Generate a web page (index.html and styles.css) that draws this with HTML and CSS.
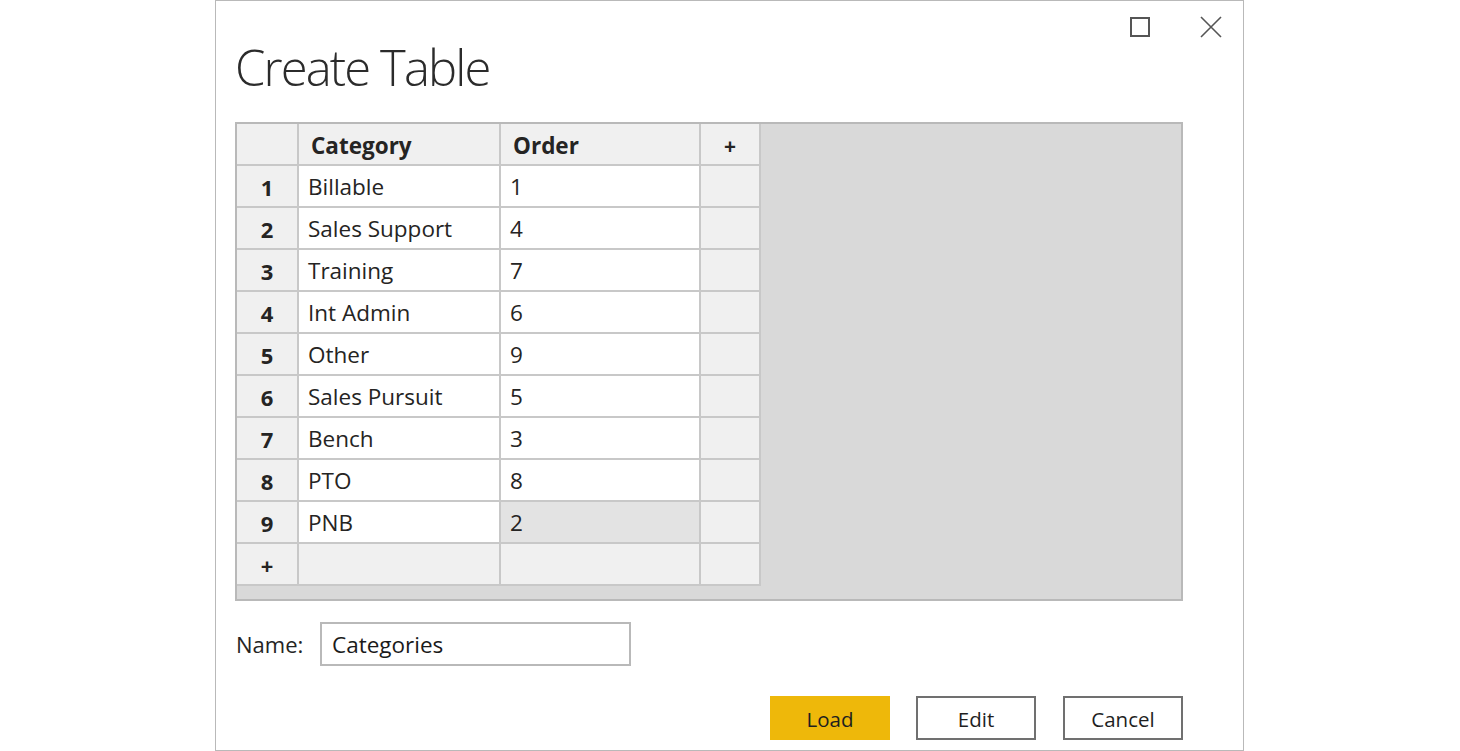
FILE: index.html
```html
<!DOCTYPE html>
<html lang="en">
<head>
<meta charset="utf-8">
<title>Create Table</title>
<link rel="stylesheet" href="styles.css">
</head>
<body>
<div class="dialog">
  <div class="titlebar">
    <svg class="icon-max" width="20" height="20" viewBox="0 0 20 20"><rect x="1" y="1" width="18" height="18" fill="none" stroke="#555" stroke-width="2"/></svg>
    <svg class="icon-close" width="22" height="22" viewBox="0 0 22 22"><path d="M1 1 L21 21 M21 1 L1 21" fill="none" stroke="#555" stroke-width="1.6"/></svg>
  </div>
  <div class="content">
    <h1 class="title">Create Table</h1>
    <div class="sheet">
      <div class="grid">
        <div class="cell head corner"></div>
        <div class="cell head colhead">Category</div>
        <div class="cell head colhead">Order</div>
        <div class="cell head plus">+</div>

        <div class="cell rownum">1</div><div class="cell data">Billable</div><div class="cell data">1</div><div class="cell side"></div>
        <div class="cell rownum">2</div><div class="cell data">Sales Support</div><div class="cell data">4</div><div class="cell side"></div>
        <div class="cell rownum">3</div><div class="cell data">Training</div><div class="cell data">7</div><div class="cell side"></div>
        <div class="cell rownum">4</div><div class="cell data">Int Admin</div><div class="cell data">6</div><div class="cell side"></div>
        <div class="cell rownum">5</div><div class="cell data">Other</div><div class="cell data">9</div><div class="cell side"></div>
        <div class="cell rownum">6</div><div class="cell data">Sales Pursuit</div><div class="cell data">5</div><div class="cell side"></div>
        <div class="cell rownum">7</div><div class="cell data">Bench</div><div class="cell data">3</div><div class="cell side"></div>
        <div class="cell rownum">8</div><div class="cell data">PTO</div><div class="cell data">8</div><div class="cell side"></div>
        <div class="cell rownum">9</div><div class="cell data">PNB</div><div class="cell data selected">2</div><div class="cell side"></div>

        <div class="cell rownum plus">+</div><div class="cell side"></div><div class="cell side"></div><div class="cell side"></div>
      </div>
    </div>
    <div class="name-row">
      <label class="name-label">Name:</label>
      <div class="name-input">Categories</div>
    </div>
    <div class="buttons">
      <div class="btn primary">Load</div>
      <div class="btn">Edit</div>
      <div class="btn cancel">Cancel</div>
    </div>
  </div>
</div>
</body>
</html>
```

FILE: styles.css
```css
html, body {
  margin: 0;
  padding: 0;
  background: #ffffff;
}

body {
  font-family: "Open Sans", "Noto Sans", sans-serif;
  color: #252423;
}

.dialog {
  box-sizing: border-box;
  width: 1029px;
  height: 751px;
  margin-left: 215px;
  border: 1px solid #b9b9b9;
  display: flex;
  flex-direction: column;
}

.titlebar {
  box-sizing: border-box;
  height: 37px;
  padding: 16px 21px 0 0;
  display: flex;
  justify-content: flex-end;
  align-items: flex-start;
  gap: 50px;
}

.icon-close {
  margin-top: -1px;
}

.content {
  padding: 0 60px 0 19px;
  display: flex;
  flex-direction: column;
}

.title {
  margin: -1px 0 25px 0;
  height: 60px;
  font-size: 49px;
  line-height: 60px;
  font-weight: 300;
  letter-spacing: -1.9px;
  color: #2b2b2b;
  white-space: nowrap;
}

.sheet {
  box-sizing: border-box;
  height: 479px;
  border: 2px solid #b9b9b9;
  background: #d9d9d9;
}

.grid {
  display: grid;
  grid-template-columns: 60px 200px 198px 58px;
  grid-auto-rows: 40px;
  gap: 2px;
  width: max-content;
  background: #c8c8c8;
  border-right: 2px solid #c8c8c8;
  border-bottom: 2px solid #c8c8c8;
}

.cell {
  box-sizing: border-box;
  font-size: 22.5px;
  line-height: 40px;
  padding-top: 1px;
  white-space: nowrap;
  overflow: hidden;
}

.head {
  background: #f0f0f0;
  padding-top: 2px;
}

.colhead {
  font-weight: 700;
  font-size: 22.5px;
  padding-left: 12px;
  color: #252423;
}

.plus {
  text-align: center;
  font-weight: 700;
  font-size: 21px;
  background: #f0f0f0;
}

.rownum {
  background: #f0f0f0;
  font-weight: 700;
  font-size: 22px;
  text-align: center;
}

.data {
  background: #ffffff;
  padding-left: 9px;
}

.data.selected {
  background: #e3e3e3;
}

.side {
  background: #f0f0f0;
}

.name-row {
  margin-top: 21px;
  display: flex;
  align-items: center;
  height: 44px;
}

.name-label {
  box-sizing: border-box;
  width: 85px;
  padding-left: 1px;
  font-size: 22px;
  color: #252423;
}

.name-input {
  box-sizing: border-box;
  width: 311px;
  height: 44px;
  border: 2px solid #b9b9b9;
  padding: 1px 0 0 10px;
  font-size: 22.5px;
  line-height: 40px;
  color: #1a1a1a;
}

.buttons {
  margin-top: 30px;
  display: flex;
  justify-content: flex-end;
  gap: 26px;
}

.btn {
  box-sizing: border-box;
  width: 120px;
  height: 44px;
  border: 2px solid #707070;
  background: #ffffff;
  font-size: 20.5px;
  line-height: 40px;
  padding-top: 1px;
  text-align: center;
  color: #1f1f1f;
}

.btn.primary {
  background: #eeb80a;
  border-color: #eeb80a;
}

.btn.cancel {
  margin-left: 1px;
}
```
